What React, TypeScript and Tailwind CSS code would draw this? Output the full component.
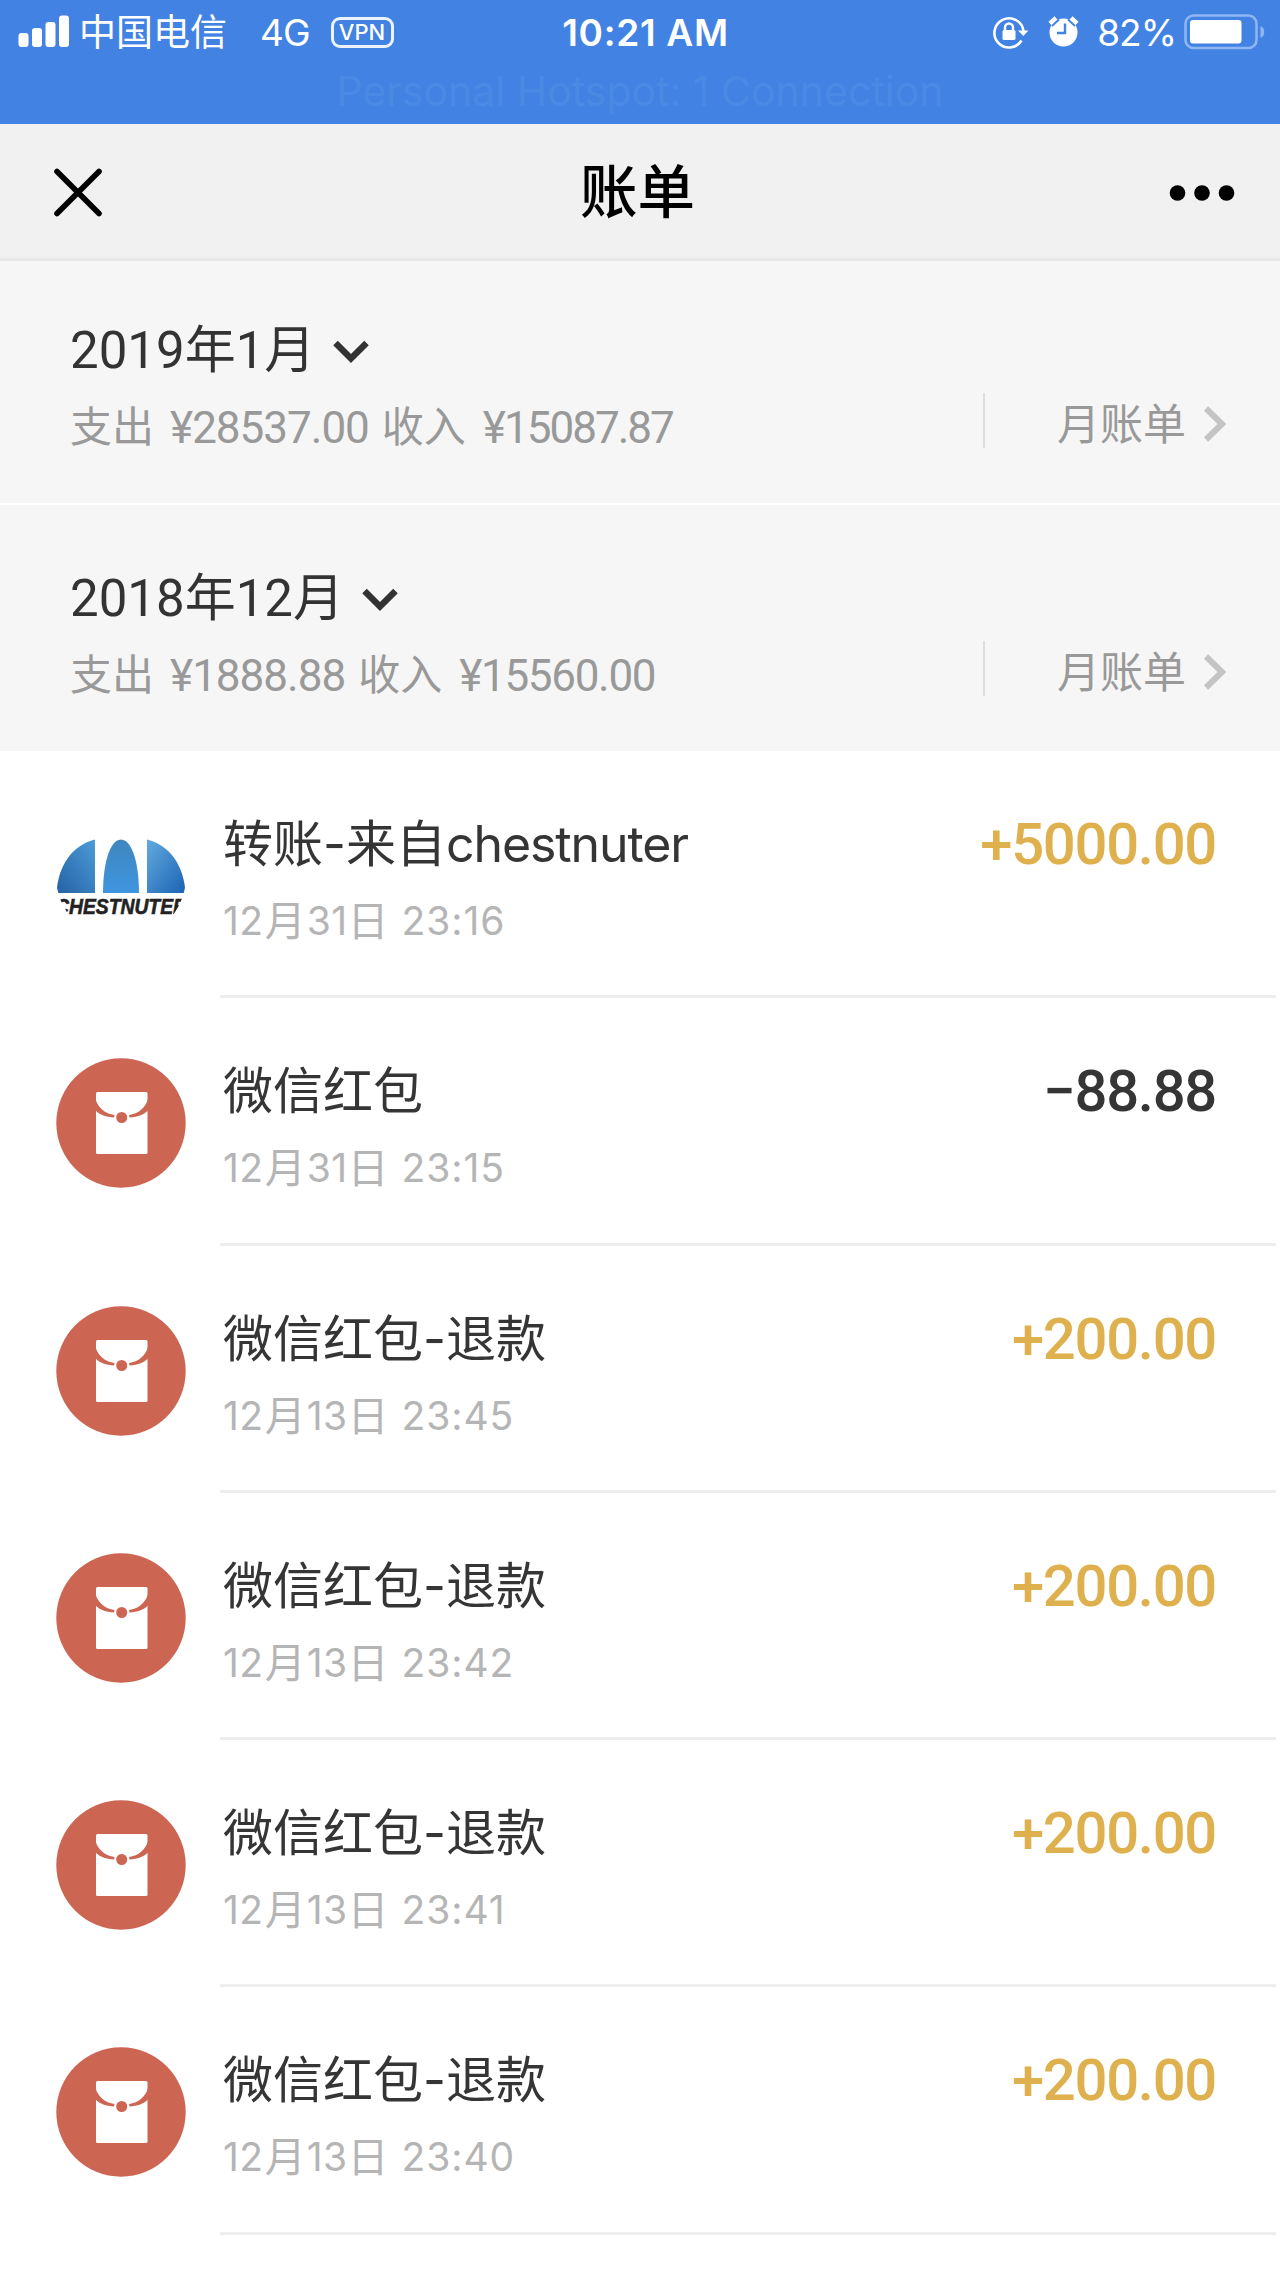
type Month = {
  label: string;
  spent: string;
  income: string;
  incomeTracking: string;
};

type Bill = {
  title: string;
  latin?: string;
  day: [string, string];
  time: string;
  amount: string;
  kind: "transfer" | "packet";
};

const months: Month[] = [
  { label: "2019年1月", spent: "28537.00", income: "15087.87", incomeTracking: "tracking-[-2px]" },
  { label: "2018年12月", spent: "1888.88", income: "15560.00", incomeTracking: "tracking-[-1.3px]" },
];

const bills: Bill[] = [
  { title: "转账-来自", latin: "chestnuter", day: ["12", "31"], time: "23:16", amount: "+5000.00", kind: "transfer" },
  { title: "微信红包", day: ["12", "31"], time: "23:15", amount: "−88.88", kind: "packet" },
  { title: "微信红包-退款", day: ["12", "13"], time: "23:45", amount: "+200.00", kind: "packet" },
  { title: "微信红包-退款", day: ["12", "13"], time: "23:42", amount: "+200.00", kind: "packet" },
  { title: "微信红包-退款", day: ["12", "13"], time: "23:41", amount: "+200.00", kind: "packet" },
  { title: "微信红包-退款", day: ["12", "13"], time: "23:40", amount: "+200.00", kind: "packet" },
];

function StatusBar() {
  return (
    <div className="h-[124px] bg-[#4282e2] text-white">
      <div className="grid h-16 grid-cols-3 items-center text-[37px] leading-none">
        <div className="flex items-center pl-[18px]">
          <svg width="52" height="34" viewBox="0 0 52 34" fill="currentColor">
            <rect x="0.5" y="18" width="10" height="14" rx="3" />
            <rect x="14" y="13" width="10" height="19" rx="3" />
            <rect x="27.5" y="7" width="10" height="25" rx="3" />
            <rect x="41" y="0.5" width="10" height="31.5" rx="3" />
          </svg>
          <span className="ml-[9px]">中国电信</span>
          <span className="ml-[33px] tracking-[-1px]">4G</span>
          <span className="ml-[21px] flex h-[31px] w-[63px] items-center justify-center rounded-[9px] border-[3px] border-white/90 text-[22px] leading-none font-medium">
            VPN
          </span>
        </div>
        <div className="pl-[11px] text-center font-semibold tracking-[0.7px]">10:21 AM</div>
        <div className="flex items-center justify-end pr-[14px]">
          {/* orientation lock */}
          <svg width="36" height="34" viewBox="0 0 36 34" fill="none" stroke="currentColor" strokeWidth="2.6">
            <path d="M28.5 25.5A14.6 14.6 0 1 1 30.5 16" />
            <path d="M25 15.5h10.5L30.3 21z" fill="currentColor" stroke="none" />
            <rect x="9.5" y="15" width="13" height="10" rx="1.5" fill="currentColor" stroke="none" />
            <path d="M12 16v-3.5a4 4 0 0 1 8 0V16" strokeWidth="2.4" />
          </svg>
          {/* alarm */}
          <svg className="ml-[19px]" width="32" height="34" viewBox="0 0 32 34">
            <circle cx="15.5" cy="17.5" r="14" fill="currentColor" />
            <path d="M2 8.5L8 3M23 3l6 5.5" stroke="currentColor" strokeWidth="4.5" />
            <path d="M4 11L11 4.5M20 4.5L27 11" stroke="#4282e2" strokeWidth="1.8" />
            <path d="M17 8.5v9.5H9" stroke="#4282e2" strokeWidth="2.4" fill="none" />
          </svg>
          <span className="ml-[17px] tracking-[-1px]">82%</span>
          <svg className="ml-[8px]" width="82" height="36" viewBox="0 0 82 36">
            <rect x="1.5" y="1.5" width="71" height="32.5" rx="8" fill="none" stroke="#8db6f2" strokeWidth="2.6" />
            <rect x="6" y="6" width="51.5" height="23.5" rx="3" fill="#fff" />
            <path d="M76.5 12c5 1.5 5 10.5 0 12z" fill="#8db6f2" />
          </svg>
        </div>
      </div>
      <div className="mt-[7px] text-center text-[41px] leading-none text-[#4b8ae4]">
        Personal Hotspot: 1 Connection
      </div>
    </div>
  );
}

function NavBar() {
  return (
    <div className="relative z-10 flex h-[137px] items-center justify-between border-b-[3px] border-[#e8e8e8] bg-[#f1f1f1] pt-[3px] pr-[45px] pl-[52px] text-black">
      <svg width="52" height="52" viewBox="0 0 52 52" stroke="currentColor" strokeWidth="5.6" strokeLinecap="round">
        <path d="M5 4.500L47 46.500M47 4.500L5 46.500" />
      </svg>
      <h1 className="pt-[1px] pl-[2px] text-[57.5px] leading-none font-medium">账单</h1>
      <svg width="66" height="18" viewBox="0 0 66 18" fill="currentColor">
        <circle cx="8.5" cy="9" r="7.8" />
        <circle cx="33" cy="9" r="7.8" />
        <circle cx="57.5" cy="9" r="7.8" />
      </svg>
    </div>
  );
}

function MonthSummary({ month }: { month: Month }) {
  return (
    <section className="flex h-[246px] justify-between bg-[#f6f6f6] pr-[53px] pl-[70px]">
      <div className="pt-[68px]">
        <div className="flex items-center font-[Roboto,'Noto_Sans_CJK_SC',sans-serif] text-[51px] leading-[52px] text-[#333]">
          {month.label}
          <svg className="mt-0.5 ml-[18px]" width="36" height="24" viewBox="0 0 36 24" fill="none" stroke="#333" strokeWidth="6.4">
            <path d="M2.5 3L18 18.5L33.5 3" />
          </svg>
        </div>
        <div className="mt-[29px] flex font-[Roboto,'Noto_Sans_CJK_SC',sans-serif] text-[44px] leading-[44px] text-[#999]">
          <span className="text-[42px]">支出</span>
          <span className="ml-[16px] tracking-[-1px]">¥{month.spent}</span>
          <span className="ml-[13px] text-[42px]">收入</span>
          <span className={`ml-[17px] ${month.incomeTracking}`}>¥{month.income}</span>
        </div>
      </div>
      <div className="mt-[136px] flex h-[55px] items-center self-start border-l-2 border-[#dedede] pt-[6px] pl-[72px]">
        <span className="pt-[2px] text-[43px] leading-none text-[#999]">月账单</span>
        <svg className="ml-[17px]" width="24" height="36" viewBox="0 0 24 36" fill="none" stroke="#c4c4c4" strokeWidth="6">
          <path d="M3 2.5L19 18L3 33.5" />
        </svg>
      </div>
    </section>
  );
}

function PacketIcon() {
  return (
    <svg width="130" height="130" viewBox="0 0 130 130">
      <circle cx="65" cy="65" r="64.7" fill="#cd6553" />
      <rect x="40" y="34" width="51.5" height="62" rx="1.5" fill="#fff" />
      <path d="M39.5 41C42 50 49 55.5 58.5 57L58 59.5C50 59 44 57 39.5 52.5z" fill="#cd6553" />
      <path d="M92 41C89.5 50 82.5 55.5 73 57L73.5 59.5C81.5 59 87.5 57 92 52.5z" fill="#cd6553" />
      <circle cx="65.7" cy="59.5" r="5.5" fill="#cd6553" />
    </svg>
  );
}

function ChestnuterLogo() {
  return (
    <svg width="130" height="130" viewBox="0 0 130 130">
      <defs>
        <linearGradient id="sail-left" x1="1" y1="0" x2="0" y2="1">
          <stop offset="0" stopColor="#4d9bd6" />
          <stop offset="1" stopColor="#2362a6" />
        </linearGradient>
        <linearGradient id="sail-mid" x1="0" y1="0" x2="0" y2="1">
          <stop offset="0" stopColor="#3f86bd" />
          <stop offset="1" stopColor="#3f95e0" />
        </linearGradient>
        <linearGradient id="sail-right" x1="0" y1="0" x2="1" y2="1">
          <stop offset="0" stopColor="#62abdf" />
          <stop offset="1" stopColor="#1b62b4" />
        </linearGradient>
        <clipPath id="logo-round">
          <circle cx="65" cy="65" r="65" />
        </clipPath>
      </defs>
      <g clipPath="url(#logo-round)">
        <path d="M39 28.5C16 34 2 55 .5 82H39z" fill="url(#sail-left)" />
        <path d="M47 82C47 55 53 29 65 28.5C77 29 83 55 83 82z" fill="url(#sail-mid)" />
        <path d="M91 28.5C114 34 128 55 129.5 82H91z" fill="url(#sail-right)" />
        <text
          x="65"
          y="102.5"
          textAnchor="middle"
          textLength="132"
          lengthAdjust="spacingAndGlyphs"
          fontSize="21.5"
          fontWeight="700"
          fontStyle="italic"
          fontFamily="'Liberation Sans', sans-serif"
          fill="#222"
          stroke="#222"
          strokeWidth="0.6"
        >
          CHESTNUTER
        </text>
      </g>
    </svg>
  );
}

function BillRow({ bill }: { bill: Bill }) {
  const income = bill.amount.startsWith("+");
  return (
    <li className="flex h-[247.3px] pl-[56px]">
      <div className="w-[164px] shrink-0 pt-[60px]">
        {bill.kind === "transfer" ? <ChestnuterLogo /> : <PacketIcon />}
      </div>
      <div className="mr-1 flex flex-1 justify-between border-b-[3px] border-[#eee] pr-[60px] pl-[3px]">
        <div className="pt-[68px]">
          <div className="text-[50px] leading-[50px] text-[#353535]">
            {bill.title}
            {bill.latin && <span className="tracking-[-1.1px]">{bill.latin}</span>}
          </div>
          <div className="mt-[32px] flex text-[39px] leading-[40px] text-[#b5b5b5]">
            <span className="tracking-[0.5px]">{bill.day[0]}</span>
            <span className="ml-[1px] text-[41px]">月</span>
            <span className="ml-[1px] tracking-[0.5px]">{bill.day[1]}</span>
            <span className="text-[41px]">日</span>
            <span className="ml-[13px] tracking-[0.9px]">{bill.time}</span>
          </div>
        </div>
        <div
          className={`pt-[64px] font-[Roboto,sans-serif] text-[58px] leading-[58px] font-medium tracking-[-1.3px] ${
            income ? "text-[#deb14e]" : "text-[#353535]"
          }`}
        >
          {bill.amount}
        </div>
      </div>
    </li>
  );
}

export default function App() {
  return (
    <div className="h-[2276px] w-[1280px] overflow-hidden bg-white font-[Inter,'Noto_Sans_CJK_SC',sans-serif]">
      <StatusBar />
      <NavBar />
      <main className="-mt-[4px]">
        <div className="flex flex-col gap-[2px]">
          {months.map((month) => (
            <MonthSummary key={month.label} month={month} />
          ))}
        </div>
        <ul>
          {bills.map((bill, i) => (
            <BillRow key={i} bill={bill} />
          ))}
        </ul>
      </main>
    </div>
  );
}
